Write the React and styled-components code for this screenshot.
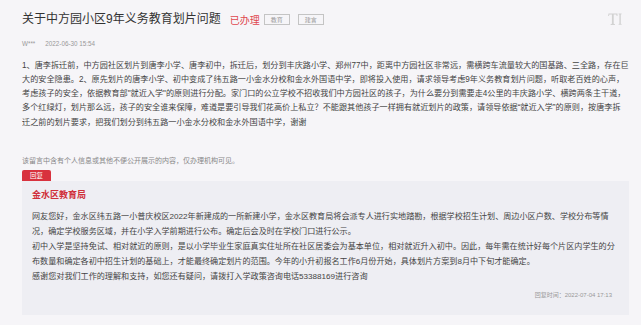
import React from 'react';
import styled, { createGlobalStyle } from 'styled-components';

const GlobalStyle = createGlobalStyle`
  body {
    margin: 0;
    background: #f6f5f8;
    font-family: "Liberation Sans", "Noto Sans CJK SC", sans-serif;
  }
`;

const questionLines = [
  '1、唐李拆迁前，中方园社区划片到唐李小学、唐李初中，拆迁后，划分到丰庆路小学、郑州77中，距离中方园社区非常远，需横跨车流量较大的国基路、三全路，存在巨',
  '大的安全隐患。2、原先划片的唐李小学、初中变成了纬五路一小金水分校和金水外国语中学，即将投入使用，请求领导考虑9年义务教育划片问题，听取老百姓的心声，',
  '考虑孩子的安全，依据教育部"就近入学"的原则进行分配。家门口的公立学校不招收我们中方园社区的孩子，为什么要分到需要走4公里的丰庆路小学、横跨两条主干道，',
  '多个红绿灯，划片那么远，孩子的安全谁来保障，难道是要引导我们花高价上私立？不能跟其他孩子一样拥有就近划片的政策，请领导依据“就近入学”的原则，按唐李拆',
  '迁之前的划片要求，把我们划分到纬五路一小金水分校和金水外国语中学，谢谢',
];

const replyLines = [
  '网友您好，金水区纬五路一小普庆校区2022年新建成的一所新建小学，金水区教育局将会派专人进行实地踏勘，根据学校招生计划、周边小区户数、学校分布等情',
  '况，确定学校服务区域，并在小学入学前期进行公布。确定后会及时在学校门口进行公示。',
  '初中入学是坚持免试、相对就近的原则，是以小学毕业生家庭真实住址所在社区居委会为基本单位，相对就近升入初中。因此，每年需在统计好每个片区内学生的分',
  '布数量和确定各初中招生计划的基础上，才能最终确定划片的范围。今年的小升初报名工作6月份开始，具体划片方案到8月中下旬才能确定。',
  '感谢您对我们工作的理解和支持，如您还有疑问，请拨打入学政策咨询电话53388169进行咨询',
];

export default function App() {
  return (
    <>
      <GlobalStyle />
      <Page>
        <Header>
          <Title>关于中方园小区9年义务教育划片问题</Title>
          <Status>已办理</Status>
          <Tag>教育</Tag>
          <Tag>建言</Tag>
          <FontToggle title="字号">
            <svg width="14" height="12" viewBox="0 0 14 12">
              <path
                d="M0.5 0.5h9v2.6h-0.8l-0.5-1.6h-2.5v9.3l1.3 0.4v0.8h-4.4v-0.8l1.3-0.4v-9.3h-2.5l-0.5 1.6h-0.8z"
                fill="currentColor"
              />
              <path
                d="M10.6 0.5h3v0.7l-0.8 0.3v9.2l0.8 0.3v0.8h-3v-0.8l0.8-0.3v-9.2l-0.8-0.3z"
                fill="currentColor"
              />
            </svg>
          </FontToggle>
        </Header>

        <Meta>
          <span>W***</span>
          <span>2022-06-30 15:54</span>
        </Meta>

        <Question>
          {questionLines.map((line, i) => (
            <Line key={i}>{line}</Line>
          ))}
        </Question>

        <Notice>该留言中含有个人信息或其他不便公开展示的内容，仅办理机构可见。</Notice>

        <Badge>回复</Badge>
        <ReplyBox>
          <Dept>金水区教育局</Dept>
          <ReplyText>
            {replyLines.map((line, i) => (
              <Line key={i}>{line}</Line>
            ))}
          </ReplyText>
          <ReplyTime>回复时间：2022-07-04 17:13</ReplyTime>
        </ReplyBox>
      </Page>
    </>
  );
}

const Page = styled.div`
  padding: 11px 12px 0 22px;
  width: 641px;
  box-sizing: border-box;
`;

const Header = styled.div`
  display: flex;
  align-items: center;
  height: 16px;
`;

const Title = styled.h1`
  margin: 0;
  font-size: 12px;
  line-height: 16px;
  font-weight: 400;
  color: #333;
  white-space: nowrap;
`;

const Status = styled.span`
  margin-left: 9px;
  font-size: 10px;
  color: #e0474f;
  white-space: nowrap;
`;

const Tag = styled.span`
  margin-left: 4px;
  & + & {
    margin-left: 8px;
  }
  width: 26px;
  height: 11px;
  box-sizing: border-box;
  border: 1px solid #c4c4c4;
  display: flex;
  align-items: center;
  justify-content: center;
  font-size: 6px;
  color: #999;
`;

const FontToggle = styled.span`
  margin-left: auto;
  margin-right: 7px;
  display: flex;
  color: #d2d2d2;
`;

const Meta = styled.div`
  margin-top: 12px;
  display: flex;
  gap: 10px;
  font-size: 6.3px;
  line-height: 10px;
  color: #999;
`;

const Question = styled.div`
  margin-top: 9.5px;
  font-size: 8.15px;
  line-height: 14.3px;
  color: #444;
`;

const Line = styled.div`
  white-space: nowrap;
`;

const Notice = styled.p`
  margin: 26px 0 0;
  font-size: 7px;
  line-height: 10px;
  color: #888;
`;

const Badge = styled.div`
  margin-top: 4px;
  width: 29px;
  height: 11px;
  background: #d8323e;
  border-radius: 2px 2px 0 0;
  color: #fff;
  font-size: 6.5px;
  display: flex;
  align-items: center;
  justify-content: center;
`;

const ReplyBox = styled.div`
  background: #eeeef3;
  padding: 8px 17px 16px 10px;
  display: flex;
  flex-direction: column;
`;

const Dept = styled.div`
  font-size: 9px;
  line-height: 12px;
  font-weight: 700;
  color: #d0303a;
`;

const ReplyText = styled.div`
  margin-top: 8.5px;
  font-size: 8.1px;
  line-height: 15px;
  color: #444;
`;

const ReplyTime = styled.div`
  margin-top: 6.5px;
  align-self: flex-end;
  font-size: 6px;
  line-height: 8px;
  color: #999;
`;
